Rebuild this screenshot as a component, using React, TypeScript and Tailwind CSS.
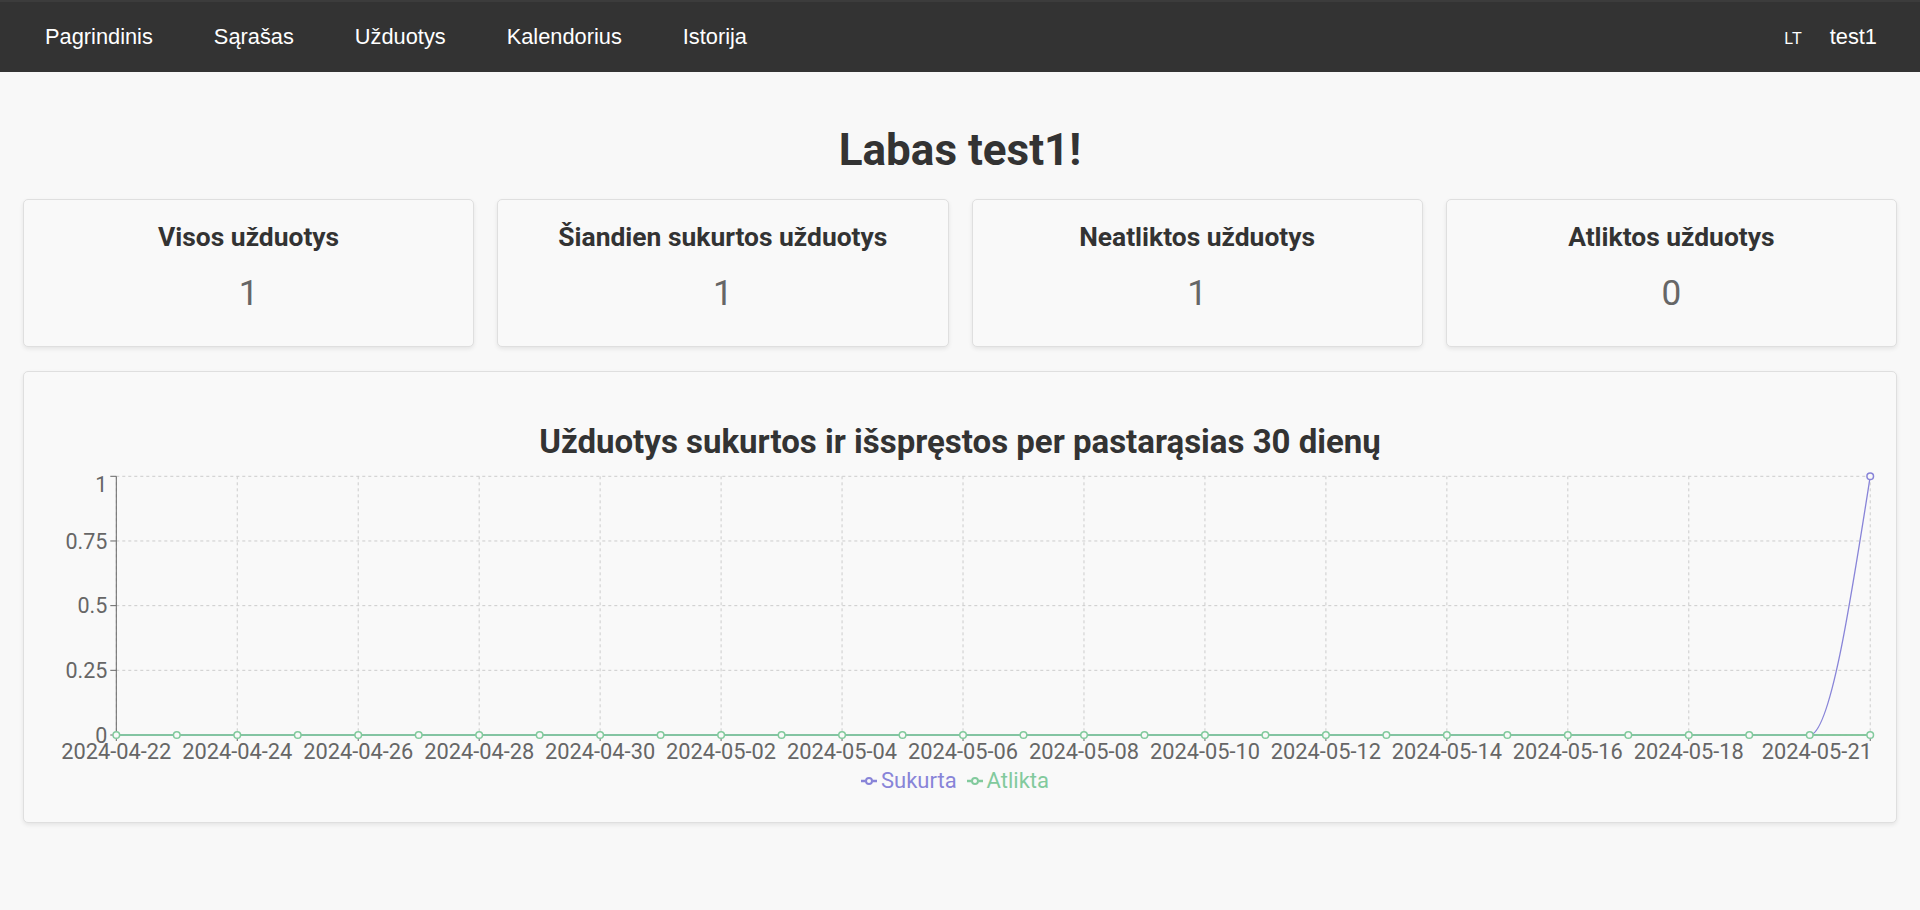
import React from "react";

const navLinks = ["Pagrindinis", "Sąrašas", "Užduotys", "Kalendorius", "Istorija"];

const stats = [
  { title: "Visos užduotys", value: 1 },
  { title: "Šiandien sukurtos užduotys", value: 1 },
  { title: "Neatliktos užduotys", value: 1 },
  { title: "Atliktos užduotys", value: 0 },
];

// 30 days, 2024-04-22 .. 2024-05-21
const days = [
  "2024-04-22", "2024-04-23", "2024-04-24", "2024-04-25", "2024-04-26", "2024-04-27",
  "2024-04-28", "2024-04-29", "2024-04-30", "2024-05-01", "2024-05-02", "2024-05-03",
  "2024-05-04", "2024-05-05", "2024-05-06", "2024-05-07", "2024-05-08", "2024-05-09",
  "2024-05-10", "2024-05-11", "2024-05-12", "2024-05-13", "2024-05-14", "2024-05-15",
  "2024-05-16", "2024-05-17", "2024-05-18", "2024-05-19", "2024-05-20", "2024-05-21",
];
const labelIdx = [0, 2, 4, 6, 8, 10, 12, 14, 16, 18, 20, 22, 24, 26, 29];

const X0 = 92.3;
const STEP = 60.48;
const Y0 = 274;
const H = 258.7;
const PURPLE = "#8884d8";
const GREEN = "#82ca9d";

const px = (i: number) => X0 + i * STEP;
const py = (v: number) => Y0 - v * H;

function Chart() {
  const xEnd = px(29);
  const x28 = px(28);
  const dx = STEP / 3;
  const slopeEnd = 1.5 * ((py(1) - py(0)) / STEP);
  const purplePath =
    `M${X0},${Y0} L${x28},${Y0} ` +
    `C${x28 + dx},${Y0} ${xEnd - dx},${py(1) - slopeEnd * dx} ${xEnd},${py(1)}`;

  const yTicks = [1, 0.75, 0.5, 0.25, 0];

  return (
    <svg width="1873" height="307" viewBox="0 0 1873 307" className="block">
      {/* grid */}
      <g stroke="#cccccc" strokeDasharray="3 3" strokeWidth="1">
        {yTicks.map((v) => (
          <line key={v} x1={X0} x2={xEnd} y1={py(v)} y2={py(v)} />
        ))}
        {labelIdx.map((i) => (
          <line key={i} x1={px(i)} x2={px(i)} y1={py(1)} y2={Y0} />
        ))}
      </g>

      {/* y axis */}
      <line x1={X0} x2={X0} y1={py(1)} y2={Y0} stroke="#666" />
      {yTicks.map((v) => (
        <line key={v} x1={X0 - 6} x2={X0} y1={py(v)} y2={py(v)} stroke="#666" />
      ))}
      <g fill="#666" fontSize="21.5" fontFamily="Roboto, sans-serif" textAnchor="end">
        {yTicks.map((v) => (
          <text key={v} x={X0 - 9} y={v === 1 ? 30.7 : py(v) + 7.8}>
            {v}
          </text>
        ))}
      </g>

      {/* x axis */}
      <line x1={X0} x2={xEnd} y1={Y0} y2={Y0} stroke="#666" />
      {labelIdx.map((i) => (
        <line key={i} x1={px(i)} x2={px(i)} y1={Y0} y2={Y0 + 6} stroke="#666" />
      ))}
      <g fill="#666" fontSize="21.8" fontFamily="Roboto, sans-serif">
        {labelIdx.map((i) => (
          <text
            key={i}
            x={i === 29 ? xEnd + 1.7 : px(i)}
            y={298.3}
            textAnchor={i === 29 ? "end" : "middle"}
          >
            {days[i]}
          </text>
        ))}
      </g>

      {/* series */}
      <path d={purplePath} stroke={PURPLE} strokeWidth="1.3" fill="none" />
      <path d={`M${X0},${Y0} H${xEnd}`} stroke={GREEN} strokeWidth="2.2" fill="none" opacity="0.9" />
      {days.map((d, i) => (
        <circle key={d} cx={px(i)} cy={Y0} r="3.3" fill="#f9f9f9" stroke={GREEN} strokeWidth="1.5" />
      ))}
      <circle cx={xEnd} cy={py(1)} r="3.3" fill="#f9f9f9" stroke={PURPLE} strokeWidth="1.5" />
    </svg>
  );
}

function LegendIcon({ color }: { color: string }) {
  return (
    <svg width="16" height="10" viewBox="0 0 16 10" className="mr-[4px]">
      <path d="M0,5 H4.5 M11.5,5 H16" stroke={color} strokeWidth="2.5" />
      <circle cx="8" cy="5" r="3" fill="#f9f9f9" stroke={color} strokeWidth="2" />
    </svg>
  );
}

export default function App() {
  return (
    <div className="min-h-screen bg-[#f8f8f8] font-['Roboto',sans-serif] text-[#333]">
      <nav className="flex h-[72px] items-center border-t-2 border-[#3c3c3c] bg-[#333333] pl-[45px] pr-[43px] font-['Liberation_Sans',Arial,sans-serif] text-white">
        <div className="flex gap-[61px] text-[21.8px]">
          {navLinks.map((l) => (
            <a key={l} href="#" className="leading-none">
              {l}
            </a>
          ))}
        </div>
        <div className="ml-auto flex items-baseline gap-[28px]">
          <span className="text-[16px]">LT</span>
          <span className="text-[21.8px]">test1</span>
        </div>
      </nav>

      <main className="px-[23px] pt-[52px]">
        <h1 className="mb-[22px] text-center text-[44px] font-bold leading-[1.2]">Labas test1!</h1>

        <div className="grid grid-cols-4 gap-[23px]">
          {stats.map((s) => (
            <div
              key={s.title}
              className="rounded-[5px] border border-[#dfdfdf] bg-[#f9f9f9] pt-[22px] pb-[31px] text-center shadow-[0_2px_4px_rgba(0,0,0,0.08)]"
            >
              <h4 className="text-[26.4px] font-bold leading-[1.2]">{s.title}</h4>
              <div className="mt-[19px] text-[35.2px] leading-[1.2] text-[#666]">{s.value}</div>
            </div>
          ))}
        </div>

        <div className="mt-[24px] rounded-[5px] border border-[#dfdfdf] bg-[#f9f9f9] pt-[50px] pb-[28px] shadow-[0_2px_4px_rgba(0,0,0,0.08)]">
          <h3 className="text-center text-[33px] font-bold leading-[1.2]">
            Užduotys sukurtos ir išspręstos per pastarąsias 30 dienų
          </h3>
          <Chart />
          <div className="flex justify-center text-[22px] leading-[1.15]">
            <div className="mr-[10px] flex items-center text-[#8884d8]">
              <LegendIcon color={PURPLE} />
              <span>Sukurta</span>
            </div>
            <div className="mr-[10px] flex items-center text-[#82ca9d]">
              <LegendIcon color={GREEN} />
              <span>Atlikta</span>
            </div>
          </div>
        </div>
      </main>
    </div>
  );
}
